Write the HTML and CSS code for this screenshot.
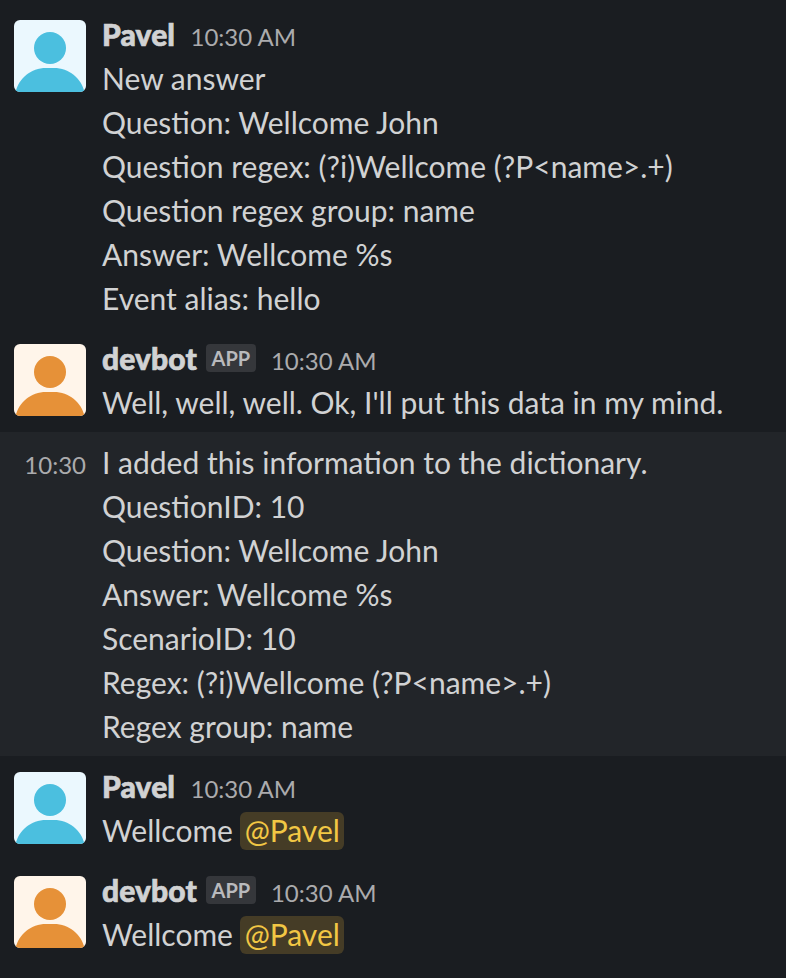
FILE: index.html
```html
<!DOCTYPE html>
<html lang="en">
<head>
<meta charset="utf-8">
<title>Messages</title>
<link rel="stylesheet" href="styles.css">
</head>
<body>
<svg class="defs" aria-hidden="true"><symbol id="person" viewBox="0 0 72 72"><circle cx="36" cy="28" r="16"/><path d="M1.5 72C5 58 17 48 32 48h8c15 0 27 10 30.500 24z"/></symbol></svg>
<main class="messages">
  <article class="message">
    <div class="gutter"><svg class="avatar blue"><use href="#person"/></svg></div>
    <div class="content">
      <header class="head"><b class="name">Pavel</b><time class="time">10:30 AM</time></header>
      <p>New answer</p>
      <p>Question: Wellcome John</p>
      <p>Question regex: (?i)Wellcome (?P&lt;name&gt;.+)</p>
      <p>Question regex group: name</p>
      <p>Answer: Wellcome %s</p>
      <p>Event alias: hello</p>
    </div>
  </article>
  <article class="message">
    <div class="gutter"><svg class="avatar orange"><use href="#person"/></svg></div>
    <div class="content">
      <header class="head"><b class="name">devbot</b><span class="badge">APP</span><time class="time">10:30 AM</time></header>
      <p>Well, well, well. Ok, I'll put this data in my mind.</p>
    </div>
  </article>
  <article class="message hovered">
    <div class="gutter"><time class="short-time">10:30</time></div>
    <div class="content">
      <p>I added this information to the dictionary.</p>
      <p>QuestionID: 10</p>
      <p>Question: Wellcome John</p>
      <p>Answer: Wellcome %s</p>
      <p>ScenarioID: 10</p>
      <p>Regex: (?i)Wellcome (?P&lt;name&gt;.+)</p>
      <p>Regex group: name</p>
    </div>
  </article>
  <article class="message">
    <div class="gutter"><svg class="avatar blue"><use href="#person"/></svg></div>
    <div class="content">
      <header class="head"><b class="name">Pavel</b><time class="time">10:30 AM</time></header>
      <p>Wellcome <span class="mention">@Pavel</span></p>
    </div>
  </article>
  <article class="message">
    <div class="gutter"><svg class="avatar orange"><use href="#person"/></svg></div>
    <div class="content">
      <header class="head"><b class="name">devbot</b><span class="badge">APP</span><time class="time">10:30 AM</time></header>
      <p>Wellcome <span class="mention">@Pavel</span></p>
    </div>
  </article>
</main>
</body>
</html>
```
FILE: styles.css
```css
* { box-sizing: border-box; }
body {
  margin: 0;
  background: #1a1d21;
  color: #d1d2d3;
  font: 30px/44px Lato, sans-serif;
}
.defs { position: absolute; width: 0; height: 0; }
.messages { padding-top: 4px; }
.message { display: flex; padding: 8px 0; }
.message.hovered { background: #222529; }
.gutter { width: 86px; margin-right: 16px; flex: none; text-align: right; }
.avatar { display: block; width: 72px; height: 72px; margin: 8px 0 0 14px; border-radius: 6px; }
.blue { background: #ebf8fe; fill: #4bbfdf; }
.orange { background: #fff5ea; fill: #e69138; }
.content { flex: 1; white-space: nowrap; }
.head { display: flex; align-items: baseline; height: 44px; }
.name { font-weight: 900; -webkit-text-stroke: 0.7px currentColor; letter-spacing: 0.1px; }
.time, .short-time { color: #ababad; font-size: 24px; }
.time { margin-left: 15.500px; }
.head .badge {
  align-self: flex-start;
  margin: 8px 0 0 9px;
  width: 50px;
  height: 28px;
  border-radius: 4px;
  background: #35373b;
  color: #b9babd;
  font-size: 20px;
  line-height: 29px;
  font-weight: 700;
  text-align: center;
}
.badge + .time { margin-left: 15px; }
p { margin: 0; }
.mention { margin-left: -1px; padding: 0 4px 2px 5px; border-radius: 6px; background: #453c26; color: #f2c744; }
```
